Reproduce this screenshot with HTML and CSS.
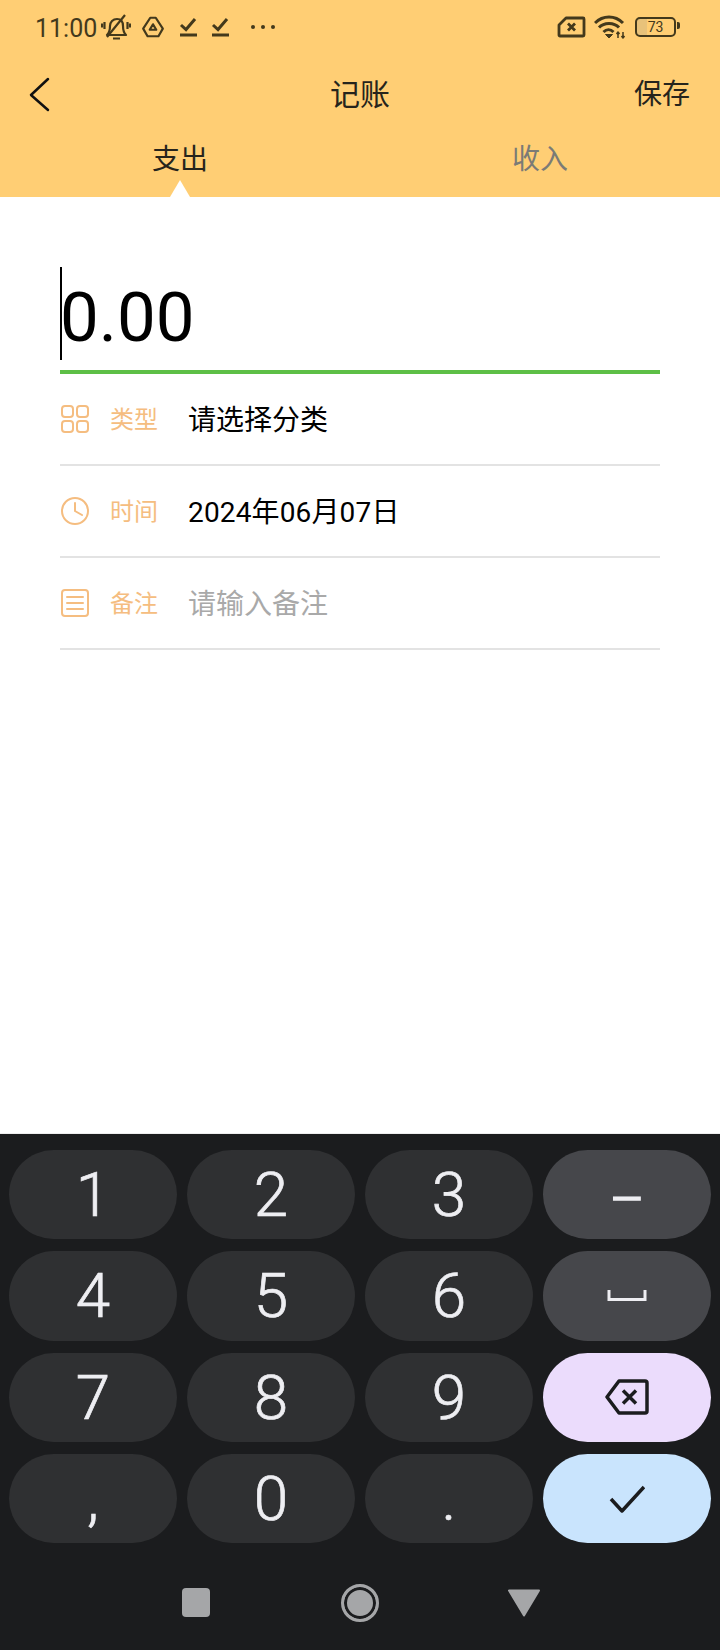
FILE: index.html
```html
<!DOCTYPE html>
<html>
<head>
    <meta name="viewport" content="width=device-width, initial-scale=1">
    <title>记账</title>
    <link rel="stylesheet" href="styles.css">
</head>
<body>
    <div class="header">
        <div class="status-bar">
            <span class="clock">11:00</span>
            <svg class="status-icon bell" width="30" height="26" viewBox="0 0 30 26">
                <path d="M6 21c2-2 3-5 3-9 0-4 3-7 7-7 4 0 6 3 6 7 0 4 1 7 3 9z"/>
                <path d="M24 1 6 23M3.500 8v7M1 9.500v4M26.500 8v7M29 9.500v4M12 24.500h7"/>
            </svg>
            <svg class="status-icon drive" width="24" height="24" viewBox="0 0 22 22">
                <path d="M8.500 2.500h5L20 12.500 16 19.500H6L2 12.500z"/>
                <path d="M11 8.500l3 5H8z"/>
            </svg>
            <svg class="status-icon task" width="18" height="20" viewBox="0 0 18 20">
                <path d="M2 8l5 4.500L16 2M1 18h17"/>
            </svg>
            <svg class="status-icon task" width="18" height="20" viewBox="0 0 18 20">
                <path d="M2 8l5 4.500L16 2M1 18h17"/>
            </svg>
            <svg class="status-dots" width="26" height="6" viewBox="0 0 26 6">
                <circle cx="3" cy="3" r="2"/>
                <circle cx="13" cy="3" r="2"/>
                <circle cx="23" cy="3" r="2"/>
            </svg>
            <div class="status-right">
                <svg class="status-icon sim" width="29" height="22" viewBox="0 0 29 22">
                    <path d="M9 2h17a1 1 0 0 1 1 1v16a1 1 0 0 1-1 1H3a1 1 0 0 1-1-1V9z"/>
                    <path d="M11 7.500l7 7M18 7.500l-7 7"/>
                </svg>
                <svg class="status-icon wifi" width="32" height="24" viewBox="0 0 32 24">
                    <path d="M1 8c8-8 20-8 28 0M5 12.500c5-5.500 15-5.500 20 0M9.500 17c3-3 7-3 10 0"/>
                    <path class="wifi-arrows" d="M24 17v6M29 17v6M22.500 19l1.500-2 1.500 2M27.500 21l1.500 2 1.500-2"/>
                    <path class="wifi-dot" d="M11.500 19.500h7L15 23z"/>
                </svg>
                <div class="battery">73</div>
            </div>
        </div>
        <div class="toolbar">
            <svg class="back" width="22" height="36" viewBox="0 0 22 36">
                <path d="M19 2 2 18l17 15"/>
            </svg>
            <span class="title">记账</span>
            <span class="save">保存</span>
        </div>
        <div class="tabs">
            <div class="tab active">支出</div>
            <div class="tab">收入</div>
        </div>
    </div>

    <div class="content">
        <div class="amount"><span class="caret"></span>0.00</div>
        <div class="row">
            <svg class="row-icon" width="30" height="30" viewBox="0 0 30 30">
                <rect x="2" y="2" width="11" height="11" rx="3"/>
                <rect x="17" y="2" width="11" height="11" rx="3"/>
                <rect x="2" y="17" width="11" height="11" rx="3"/>
                <rect x="17" y="17" width="11" height="11" rx="3"/>
            </svg>
            <span class="row-label">类型</span>
            <span class="row-value">请选择分类</span>
        </div>
        <div class="row">
            <svg class="row-icon" width="30" height="30" viewBox="0 0 30 30">
                <circle cx="15" cy="15" r="13"/>
                <path d="M15 7v8l7 4"/>
            </svg>
            <span class="row-label">时间</span>
            <span class="row-value date">2024年06月07日</span>
        </div>
        <div class="row">
            <svg class="row-icon" width="30" height="30" viewBox="0 0 30 30">
                <rect x="2" y="2" width="26" height="26" rx="3"/>
                <path d="M7 9h16M7 15h16M7 21h16"/>
            </svg>
            <span class="row-label">备注</span>
            <span class="row-value placeholder">请输入备注</span>
        </div>
    </div>

    <div class="keyboard">
        <div class="keys">
            <div class="key">1</div>
            <div class="key">2</div>
            <div class="key">3</div>
            <div class="key fn dash">–</div>
            <div class="key">4</div>
            <div class="key">5</div>
            <div class="key">6</div>
            <div class="key fn">
                <svg class="space-icon" width="40" height="12" viewBox="0 0 40 12">
                    <path d="M2 0v9.500h36V0"/>
                </svg>
            </div>
            <div class="key">7</div>
            <div class="key">8</div>
            <div class="key">9</div>
            <div class="key delete">
                <svg class="key-icon" width="44" height="36" viewBox="0 0 44 36">
                    <path d="M14 2h26a2 2 0 0 1 2 2v28a2 2 0 0 1-2 2H14L2 18z"/>
                    <path d="M18 11.500l13 13M31 11.500l-13 13"/>
                </svg>
            </div>
            <div class="key">,</div>
            <div class="key">0</div>
            <div class="key">.</div>
            <div class="key done">
                <svg class="key-icon" width="36" height="28" viewBox="0 0 36 28">
                    <path d="M2 14l11 12L35 2"/>
                </svg>
            </div>
        </div>
        <div class="nav">
            <div class="nav-slot"><span class="nav-square"></span></div>
            <div class="nav-slot"><span class="nav-circle"></span></div>
            <div class="nav-slot">
                <svg width="34" height="28" viewBox="0 0 34 28">
                    <path class="nav-back" d="M2 1.500h30L17 26.500z"/>
                </svg>
            </div>
        </div>
    </div>
</body>
</html>
```

FILE: styles.css
```css
* {
    box-sizing: border-box;
}

html, body {
    margin: 0;
    padding: 0;
}

body {
    width: 720px;
    height: 1650px;
    display: flex;
    flex-direction: column;
    font-family: Roboto, "Noto Sans CJK SC", sans-serif;
    background-color: #fff;
    overflow: hidden;
}

/* header */
.header {
    background-color: #ffce74;
    height: 197px;
}

.status-bar {
    height: 54px;
    display: flex;
    align-items: center;
    padding-left: 35px;
    color: #43391c;
}

.clock {
    font-size: 25px;
    width: 66px;
    padding-top: 2px;
}

.status-icon {
    fill: none;
    stroke: #43391c;
    stroke-width: 2.2;
    stroke-linejoin: round;
}

.drive {
    margin-left: 10px;
    stroke-width: 2;
}

.task {
    margin-left: 14px;
    stroke-width: 3;
    stroke-linejoin: miter;
}

.status-dots {
    fill: #43391c;
    margin-left: 21px;
}

.status-right {
    margin-left: auto;
    margin-right: 44px;
    display: flex;
    align-items: center;
}

.sim {
    stroke-width: 2.8;
}

.wifi {
    margin-left: 8px;
    stroke-width: 3;
}

.wifi-arrows {
    stroke-width: 1.5;
}

.wifi-dot {
    fill: #43391c;
    stroke-width: 1;
}

.battery {
    position: relative;
    margin-left: 9px;
    width: 41px;
    height: 20px;
    border: 2px solid #43391c;
    border-radius: 5px;
    font-size: 14px;
    line-height: 16px;
    text-align: center;
    background: linear-gradient(to right, #e8c27a 28%, transparent 28%);
}

.battery::after {
    content: "";
    position: absolute;
    right: -6px;
    top: 3px;
    width: 3px;
    height: 7px;
    border-radius: 0 2px 2px 0;
    background-color: #43391c;
}

.toolbar {
    height: 80px;
    display: flex;
    align-items: center;
    justify-content: center;
    position: relative;
    color: #26241c;
    padding-bottom: 4px;
}

.back {
    position: absolute;
    left: 29px;
    top: 23px;
    fill: none;
    stroke: #111;
    stroke-width: 2.5;
    stroke-linecap: round;
    stroke-linejoin: round;
}

.title {
    font-size: 30px;
}

.save {
    position: absolute;
    right: 30px;
    font-size: 28px;
}

.tabs {
    height: 63px;
    display: flex;
}

.tab {
    flex: 1;
    position: relative;
    text-align: center;
    font-size: 28px;
    line-height: 52px;
    color: #7b7b76;
}

.tab.active {
    color: #26241c;
}

.tab.active::after {
    content: "";
    position: absolute;
    left: 170px;
    bottom: 0;
    border-left: 10px solid transparent;
    border-right: 10px solid transparent;
    border-bottom: 17px solid #fff;
}

/* form */
.content {
    flex: 1;
    padding: 70px 60px 0;
    border-bottom: 1px solid #eee;
}

.amount {
    position: relative;
    height: 107px;
    border-bottom: 4px solid #5dbf46;
    font-size: 69px;
    line-height: 102px;
    color: #000;
}

.caret {
    position: absolute;
    left: 0;
    top: 0;
    width: 2px;
    height: 93px;
    background-color: #000;
}

.row {
    height: 92px;
    display: flex;
    align-items: center;
    border-bottom: 2px solid #e3e3e3;
}

.row-icon {
    fill: none;
    stroke: #f5bd80;
    stroke-width: 2;
    stroke-linecap: round;
    flex-shrink: 0;
}

.row-label {
    margin-left: 20px;
    margin-bottom: 3px;
    width: 48px;
    font-size: 24px;
    color: #f5bd80;
}

.row-value {
    margin-left: 30px;
    margin-bottom: 3px;
    font-size: 28px;
    color: #000;
}

.row-value.date {
    letter-spacing: 0.15px;
}

.row-value.placeholder {
    color: #a9a9a9;
}

/* keyboard */
.keyboard {
    height: 516px;
    background-color: #1b1c1e;
}

.keys {
    display: grid;
    grid-template-columns: repeat(4, 168px);
    grid-auto-rows: 89.33px;
    column-gap: 10px;
    row-gap: 12px;
    padding: 16px 9px 0;
}

.key {
    display: flex;
    align-items: center;
    justify-content: center;
    border-radius: 45px;
    background-color: #2f3032;
    color: #eeeef2;
    font-size: 62px;
    font-weight: 300;
    -webkit-text-stroke: 0.7px #eeeef2;
}

.key.fn {
    background-color: #46474b;
}

.key.dash {
    font-size: 54px;
    padding-top: 10px;
    -webkit-text-stroke: 1.4px #eeeef2;
}

.key.delete {
    background-color: #ebdcfc;
}

.key.done {
    background-color: #c9e4fd;
}

.space-icon {
    fill: none;
    stroke: #eeeef2;
    stroke-width: 3;
}

.key-icon {
    fill: none;
    stroke: #1b1c1e;
    stroke-width: 3.5;
    stroke-linejoin: round;
}

.nav {
    display: flex;
    justify-content: center;
    align-items: center;
    height: 106px;
    padding-top: 13px;
}

.nav-slot {
    width: 164px;
    display: flex;
    justify-content: center;
    align-items: center;
}

.nav-square {
    width: 28px;
    height: 29px;
    border-radius: 4px;
    background-color: #a5a6a8;
}

.nav-circle {
    width: 38px;
    height: 38px;
    border-radius: 50%;
    border: 3px solid #a5a6a8;
    background-color: #a5a6a8;
    box-shadow: inset 0 0 0 3px #1b1c1e;
}

.nav-back {
    fill: #a5a6a8;
    stroke: #a5a6a8;
    stroke-width: 2;
    stroke-linejoin: round;
}
```
